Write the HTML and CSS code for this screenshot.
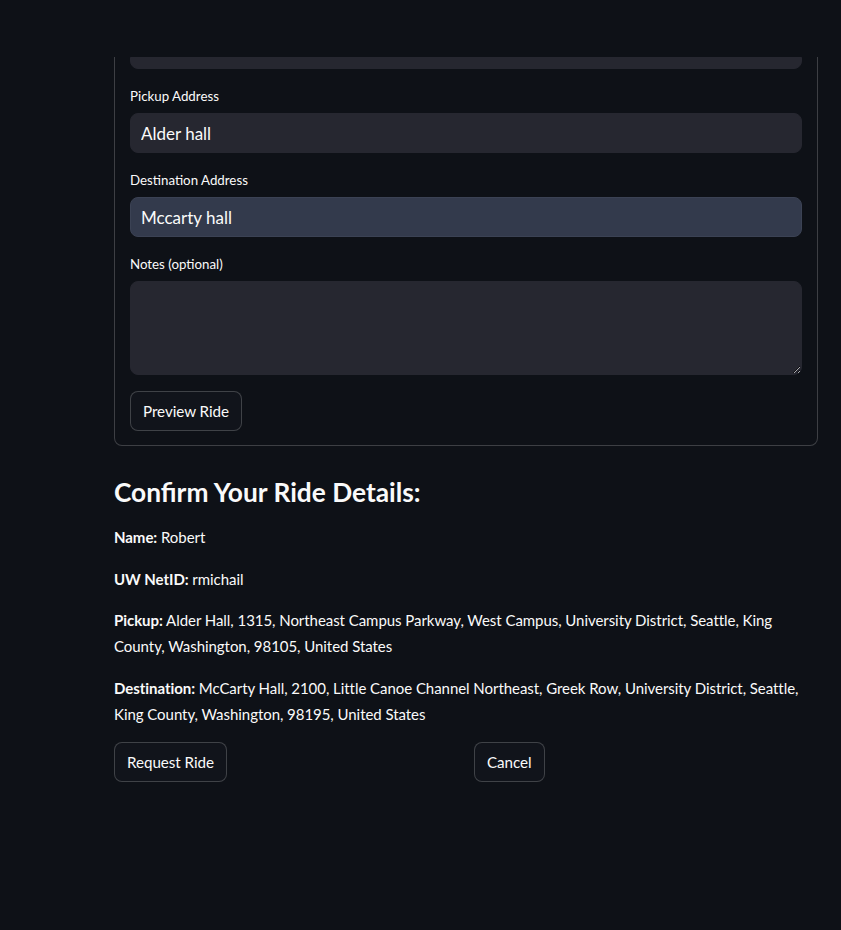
FILE: index.html
```html
<!DOCTYPE html>
<html lang="en">
<head>
<meta charset="utf-8">
<title>Request a Ride</title>
<link rel="stylesheet" href="styles.css">
</head>
<body>
<header class="topbar"></header>
<main class="main">
  <form class="ride-form">
    <div class="input clipped"></div>
    <div class="field">
      <label class="label" for="pickup">Pickup Address</label>
      <input id="pickup" class="input" type="text" value="Alder hall">
    </div>
    <div class="field">
      <label class="label" for="dest">Destination Address</label>
      <input id="dest" class="input active" type="text" value="Mccarty hall">
    </div>
    <div class="field">
      <label class="label" for="notes">Notes (optional)</label>
      <textarea id="notes" class="input textarea"></textarea>
    </div>
    <div class="field">
      <button type="button" class="btn">Preview Ride</button>
    </div>
  </form>

  <section class="confirm">
    <h3 class="title">Confirm Your Ride Details:</h3>
    <p class="detail"><strong>Name:</strong> Robert</p>
    <p class="detail"><strong>UW NetID:</strong> rmichail</p>
    <p class="detail"><strong>Pickup:</strong> Alder Hall, 1315, Northeast Campus Parkway, West Campus, University District, Seattle, King County, Washington, 98105, United States</p>
    <p class="detail"><strong>Destination:</strong> McCarty Hall, 2100, Little Canoe Channel Northeast, Greek Row, University District, Seattle, King County, Washington, 98195, United States</p>
    <div class="columns">
      <div class="col"><button type="button" class="btn">Request Ride</button></div>
      <div class="col"><button type="button" class="btn">Cancel</button></div>
    </div>
  </section>
</main>
</body>
</html>
```

FILE: styles.css
```css
* { box-sizing: border-box; }

html, body {
  margin: 0;
  padding: 0;
  background: #0e1117;
  color: #fafafa;
  font-family: "Source Sans Pro", Lato, "Liberation Sans", sans-serif;
  font-size: 15px;
}

body {
  height: 930px;
  overflow: hidden;
}

.topbar {
  height: 57px;
  background: #0e1117;
}

.main {
  width: 704px;
  margin-left: 114px;
}

.ride-form {
  border: 1px solid rgba(250, 250, 250, 0.2);
  border-top: none;
  border-radius: 0 0 8px 8px;
  padding: 0 15px 14px 15px;
  display: flex;
  flex-direction: column;
}

.field {
  margin-top: 16px;
  display: flex;
  flex-direction: column;
}

.label {
  font-size: 13.3px;
  line-height: 22px;
  margin-bottom: 6px;
  color: #fafafa;
}

.input {
  display: block;
  width: 100%;
  height: 40px;
  background: #262730;
  border: 1px solid #262730;
  border-radius: 8px;
  color: #fafafa;
  font-family: inherit;
  font-size: 17px;
  padding: 0 10px;
  outline: none;
}

.input.clipped {
  height: 12px;
  border-top-left-radius: 0;
  border-top-right-radius: 0;
}

.input.active {
  background: #333a4c;
  border-color: #3b4254;
}

.textarea {
  height: 94px;
  resize: vertical;
  padding: 10px;
}

.btn {
  align-self: flex-start;
  height: 40px;
  padding: 0 12px;
  background: #11141b;
  color: #fafafa;
  border: 1px solid rgba(250, 250, 250, 0.2);
  border-radius: 8px;
  font-family: inherit;
  font-size: 15.2px;
  letter-spacing: -0.05px;
  cursor: pointer;
}

.confirm {
  margin-top: 16px;
}

.title {
  margin: 0;
  padding: 14px 0 14px 0;
  font-size: 26.3px;
  line-height: 33px;
  font-weight: 700;
  height: 62px;
}

.detail {
  margin: 0 0 15.5px 0;
  font-size: 15px;
  letter-spacing: -0.05px;
  line-height: 26px;
}

.detail strong {
  font-weight: 700;
}

.columns {
  display: grid;
  grid-template-columns: 1fr 1fr;
  gap: 16px;
  margin-top: 4.5px;
}

.col {
  display: flex;
}
```
